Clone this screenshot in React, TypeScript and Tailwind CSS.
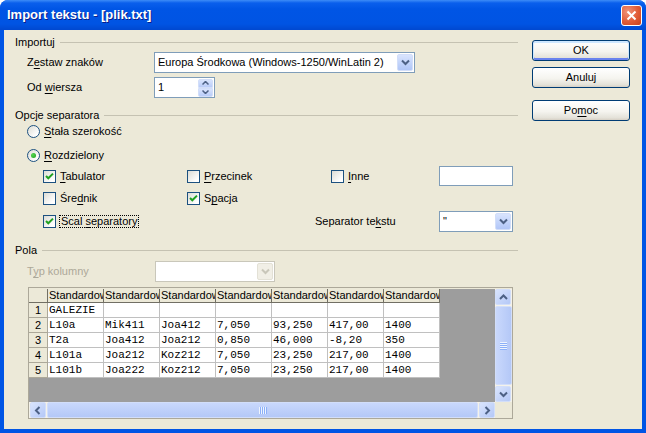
import type { ReactNode } from "react";

// XP-style "Import tekstu" dialog.

const HEADERS = Array.from({ length: 7 }, () => "Standardowy");

const ROWS: string[][] = [
  ["GALEZIE", "", "", "", "", "", ""],
  ["L10a", "Mik411", "Joa412", "7,050", "93,250", "417,00", "1400"],
  ["T2a", "Joa412", "Joa212", "0,850", "46,000", "-8,20", "350"],
  ["L101a", "Joa212", "Koz212", "7,050", "23,250", "217,00", "1400"],
  ["L101b", "Joa222", "Koz212", "7,050", "23,250", "217,00", "1400"],
];

function K({ children }: { children: ReactNode }) {
  return <span className="underline underline-offset-[2px]">{children}</span>;
}

function Chevron({ dir = "down", color = "#4D6185" }: { dir?: "down" | "up" | "left" | "right"; color?: string }) {
  const d = {
    down: "M1 1.5 L4.5 5 L8 1.5",
    up: "M1 5 L4.5 1.5 L8 5",
    left: "M5.5 1 L2 4.5 L5.5 8",
    right: "M2.5 1 L6 4.5 L2.5 8",
  }[dir];
  const vertical = dir === "down" || dir === "up";
  return (
    <svg width={vertical ? 9 : 8} height={vertical ? 7 : 9} viewBox={vertical ? "0 0 9 7" : "0 0 8 9"}>
      <path d={d} stroke={color} strokeWidth="2" fill="none" />
    </svg>
  );
}

function ComboBtn({ disabled }: { disabled?: boolean }) {
  return (
    <span
      className={
        disabled
          ? "flex h-[17px] w-[16px] items-center justify-center rounded-[2px] border border-[#E3E1D6] bg-[#F1EFE6]"
          : "flex h-[17px] w-[16px] items-center justify-center rounded-[2px] border border-[#D2DEF9] bg-[linear-gradient(180deg,#D9E4FD_0%,#C0D2FA_60%,#B1C6F7_100%)]"
      }
    >
      <Chevron color={disabled ? "#C9C7BA" : "#4D6185"} />
    </span>
  );
}

function Combo({ value, className, disabled }: { value?: string; className: string; disabled?: boolean }) {
  return (
    <div
      className={`flex h-[21px] items-center justify-between border bg-white pl-[3px] pr-px ${
        disabled ? "border-[#C9C7BA]" : "border-[#7F9DB9]"
      } ${className}`}
    >
      <span className="whitespace-nowrap">{value}</span>
      <ComboBtn disabled={disabled} />
    </div>
  );
}

function Check({ on }: { on?: boolean }) {
  return (
    <span className="flex h-[13px] w-[13px] shrink-0 items-center justify-center border border-[#1C5180] bg-[linear-gradient(135deg,#DCDCD5,#FFFFFF_80%)]">
      {on && (
        <svg width="9" height="9" viewBox="0 0 9 9">
          <path d="M1 4 L3.3 6.3 L8 1.6" stroke="#21A121" strokeWidth="2" fill="none" />
        </svg>
      )}
    </span>
  );
}

function Radio({ on }: { on?: boolean }) {
  return (
    <span className="flex h-[13px] w-[13px] shrink-0 items-center justify-center rounded-full border border-[#1C5180] bg-[linear-gradient(135deg,#DCDCD5,#FFFFFF_80%)]">
      {on && <span className="h-[5px] w-[5px] rounded-full bg-[radial-gradient(circle_at_35%_35%,#55D651,#21A121)]" />}
    </span>
  );
}

function CheckLabel({ on, children, focus }: { on?: boolean; children: ReactNode; focus?: boolean }) {
  return (
    <div className="flex items-center gap-[3px]">
      <Check on={on} />
      <span className={focus ? "border border-dotted border-black px-px leading-[11px]" : "px-px"}>{children}</span>
    </div>
  );
}

function Heading({ children }: { children: ReactNode }) {
  return (
    <div className="flex h-[14px] items-center gap-[5px]">
      <span>{children}</span>
      <span className="h-px flex-1 bg-[#C5C2B2]" />
    </div>
  );
}

function Btn({ children, primary }: { children: ReactNode; primary?: boolean }) {
  return (
    <div
      className={
        primary
          ? "flex h-[21px] w-[98px] items-center justify-center rounded-[3px] border border-[#003C74] bg-[linear-gradient(180deg,#FFFFFF_0%,#F5F4EF_55%,#E4E2D9_88%,#D6D0C5_100%)] shadow-[inset_0_1px_0_1px_#CEE7FF,inset_0_-1px_0_1px_#6982EE]"
          : "flex h-[21px] w-[98px] items-center justify-center rounded-[3px] border border-[#003C74] bg-[linear-gradient(180deg,#FFFFFF_0%,#F5F4EF_55%,#E4E2D9_88%,#D6D0C5_100%)]"
      }
    >
      {children}
    </div>
  );
}

function ScrollBtn({ dir }: { dir: "up" | "down" | "left" | "right" }) {
  return (
    <div className="flex h-[16px] w-[16px] shrink-0 items-center justify-center rounded-[2px] border border-[#D2DEF9] bg-[linear-gradient(135deg,#D9E4FD,#B4C8F7)]">
      <Chevron dir={dir} />
    </div>
  );
}

function Grid() {
  return (
    <div className="overflow-hidden bg-[#9D9D9D]">
      <div className="flex h-[14px]">
        <div className="w-[19px] shrink-0 border-r border-b border-[#716F64] bg-[#ECE9D8]" />
        {HEADERS.map((h, i) => (
          <div
            key={i}
            className="w-[56px] shrink-0 overflow-hidden whitespace-nowrap border-r border-b border-[#716F64] bg-[#ECE9D8] pl-px text-[11px] leading-[13px]"
          >
            {h}
          </div>
        ))}
      </div>
      {ROWS.map((r, i) => (
        <div key={i} className="flex h-[15px]">
          <div className="w-[19px] shrink-0 border-r border-b border-[#ACA899] bg-[#ECE9D8] text-center leading-[14px]">
            {i + 1}
          </div>
          {r.map((c, j) => (
            <div
              key={j}
              className="w-[56px] shrink-0 overflow-hidden whitespace-nowrap border-r border-b border-[#C0C0C0] bg-white pl-px font-['Liberation_Mono',monospace] text-[11px] leading-[14px]"
            >
              {c}
            </div>
          ))}
        </div>
      ))}
    </div>
  );
}

function VScroll() {
  return (
    <div className="flex flex-col bg-[#F4F2EA]">
      <ScrollBtn dir="up" />
      <div className="my-px flex flex-1 items-center justify-center rounded-[2px] border border-[#D2DEF9] bg-[linear-gradient(90deg,#C9D8FC,#B4C8F7)]">
        <div className="flex flex-col gap-px">
          {[0, 1, 2, 3].map((i) => (
            <span key={i} className="h-px w-[7px] bg-[#EEF4FE] shadow-[0_1px_0_#8CB0F8]" />
          ))}
        </div>
      </div>
      <ScrollBtn dir="down" />
    </div>
  );
}

function HScroll() {
  return (
    <div className="flex bg-[#F4F2EA] pl-px">
      <ScrollBtn dir="left" />
      <div className="mx-px flex flex-1 items-center justify-center rounded-[2px] border border-[#D2DEF9] bg-[linear-gradient(180deg,#C9D8FC,#B4C8F7)]">
        <div className="flex gap-px">
          {[0, 1, 2, 3].map((i) => (
            <span key={i} className="h-[7px] w-px bg-[#EEF4FE] shadow-[1px_0_0_#8CB0F8]" />
          ))}
        </div>
      </div>
      <ScrollBtn dir="right" />
    </div>
  );
}

export default function App() {
  return (
    <div className="flex h-[433px] w-[646px] flex-col overflow-hidden rounded-t-[8px] bg-[#0055E5] font-['Liberation_Sans',Arial,sans-serif] text-[11px] text-black">
      {/* title bar */}
      <div className="flex h-[30px] shrink-0 items-center justify-between bg-[linear-gradient(180deg,#3D8CF7_0%,#0A5FEC_10%,#0055E5_30%,#0054E3_80%,#0048D0_100%)] pl-[7px] pr-[4px]">
        <span className="text-[13px] font-bold text-white [text-shadow:1px_1px_0_#0A1E8A]">Import tekstu - [plik.txt]</span>
        <div className="flex h-[21px] w-[21px] items-center justify-center rounded-[3px] border border-white bg-[radial-gradient(circle_at_30%_30%,#F0937A,#E15B36_55%,#C7401C)]">
          <svg width="11" height="11" viewBox="0 0 11 11">
            <path d="M1.5 1.5 L9.5 9.5 M9.5 1.5 L1.5 9.5" stroke="white" strokeWidth="2" />
          </svg>
        </div>
      </div>

      <div className="flex flex-1 px-[4px] pb-[4px]">
        <div className="flex flex-1 bg-[#ECE9D8]">
          {/* left form */}
          <div className="flex w-[514px] flex-col pl-[11px] pt-[5px]">
            <Heading>Importuj</Heading>
            <div className="mt-[3px] flex h-[21px] items-center">
              <span className="w-[139px] pl-[12px]">
                Z<K>e</K>staw znaków
              </span>
              <Combo className="w-[261px]" value="Europa Środkowa (Windows-1250/WinLatin 2)" />
            </div>
            <div className="mt-[4px] flex h-[21px] items-center">
              <span className="w-[139px] pl-[12px]">
                Od <K>w</K>iersza
              </span>
              <div className="flex h-[21px] w-[61px] items-center justify-between border border-[#7F9DB9] bg-white pl-[3px] pr-px">
                <span>1</span>
                <div className="flex flex-col">
                  <span className="flex h-[9px] w-[15px] items-center justify-center rounded-t-[2px] border border-[#D2DEF9] bg-[linear-gradient(180deg,#D9E4FD,#B9CCF8)]">
                    <svg width="7" height="4" viewBox="0 0 7 4">
                      <path d="M0.5 3.5 L3.5 0.5 L6.5 3.5" stroke="#4D6185" strokeWidth="1.5" fill="none" />
                    </svg>
                  </span>
                  <span className="flex h-[9px] w-[15px] items-center justify-center rounded-b-[2px] border border-[#D2DEF9] bg-[linear-gradient(180deg,#D9E4FD,#B9CCF8)]">
                    <svg width="7" height="4" viewBox="0 0 7 4">
                      <path d="M0.5 0.5 L3.5 3.5 L6.5 0.5" stroke="#4D6185" strokeWidth="1.5" fill="none" />
                    </svg>
                  </span>
                </div>
              </div>
            </div>

            <div className="mt-[10px]">
              <Heading>Opcje separatora</Heading>
            </div>
            <div className="mt-[2px] flex h-[14px] items-center gap-[4px] pl-[12px]">
              <Radio />
              <span>
                <K>S</K>tała szerokość
              </span>
            </div>
            <div className="mt-[10px] flex h-[14px] items-center gap-[4px] pl-[12px]">
              <Radio on />
              <span>
                <K>R</K>ozdzielony
              </span>
            </div>
            <div className="mt-[4px] grid h-[20px] grid-cols-[144px_144px_108px_74px] items-center pl-[28px]">
              <CheckLabel on>
                <K>T</K>abulator
              </CheckLabel>
              <CheckLabel>
                <K>P</K>rzecinek
              </CheckLabel>
              <CheckLabel>
                <K>I</K>nne
              </CheckLabel>
              <div className="h-[20px] border border-[#7F9DB9] bg-white" />
            </div>
            <div className="mt-[4px] grid h-[14px] grid-cols-[144px_144px] items-center pl-[28px]">
              <CheckLabel>
                Śre<K>d</K>nik
              </CheckLabel>
              <CheckLabel on>
                S<K>p</K>acja
              </CheckLabel>
            </div>
            <div className="mt-[7px] flex h-[20px] items-center pl-[28px]">
              <div className="w-[272px]">
                <CheckLabel on focus>
                  Scal <K>s</K>eparatory
                </CheckLabel>
              </div>
              <span className="w-[124px]">
                Separator te<K>k</K>stu
              </span>
              <Combo className="w-[74px]" value={'"'} />
            </div>

            <div className="mt-[12px]">
              <Heading>Pola</Heading>
            </div>
            <div className="mt-[4px] flex h-[21px] items-center">
              <span className="w-[140px] pl-[12px] text-[#ACA899]">
                T<K>y</K>p kolumny
              </span>
              <Combo className="w-[120px]" disabled />
            </div>

            <div className="ml-[13px] mt-[5px] flex h-[132px] w-[485px] border border-[#ACA899] bg-[#ECE9D8] pt-px">
              <div className="grid flex-1 grid-cols-[1fr_17px] grid-rows-[1fr_16px]">
                <Grid />
                <VScroll />
                <HScroll />
                <div className="bg-[#ECE9D8]" />
              </div>
            </div>
          </div>

          {/* buttons */}
          <div className="flex flex-col pl-[14px] pt-[10px]">
            <Btn primary>OK</Btn>
            <div className="mt-[6px]">
              <Btn>Anuluj</Btn>
            </div>
            <div className="mt-[12px]">
              <Btn>
                Po<K>m</K>oc
              </Btn>
            </div>
          </div>
        </div>
      </div>
    </div>
  );
}
